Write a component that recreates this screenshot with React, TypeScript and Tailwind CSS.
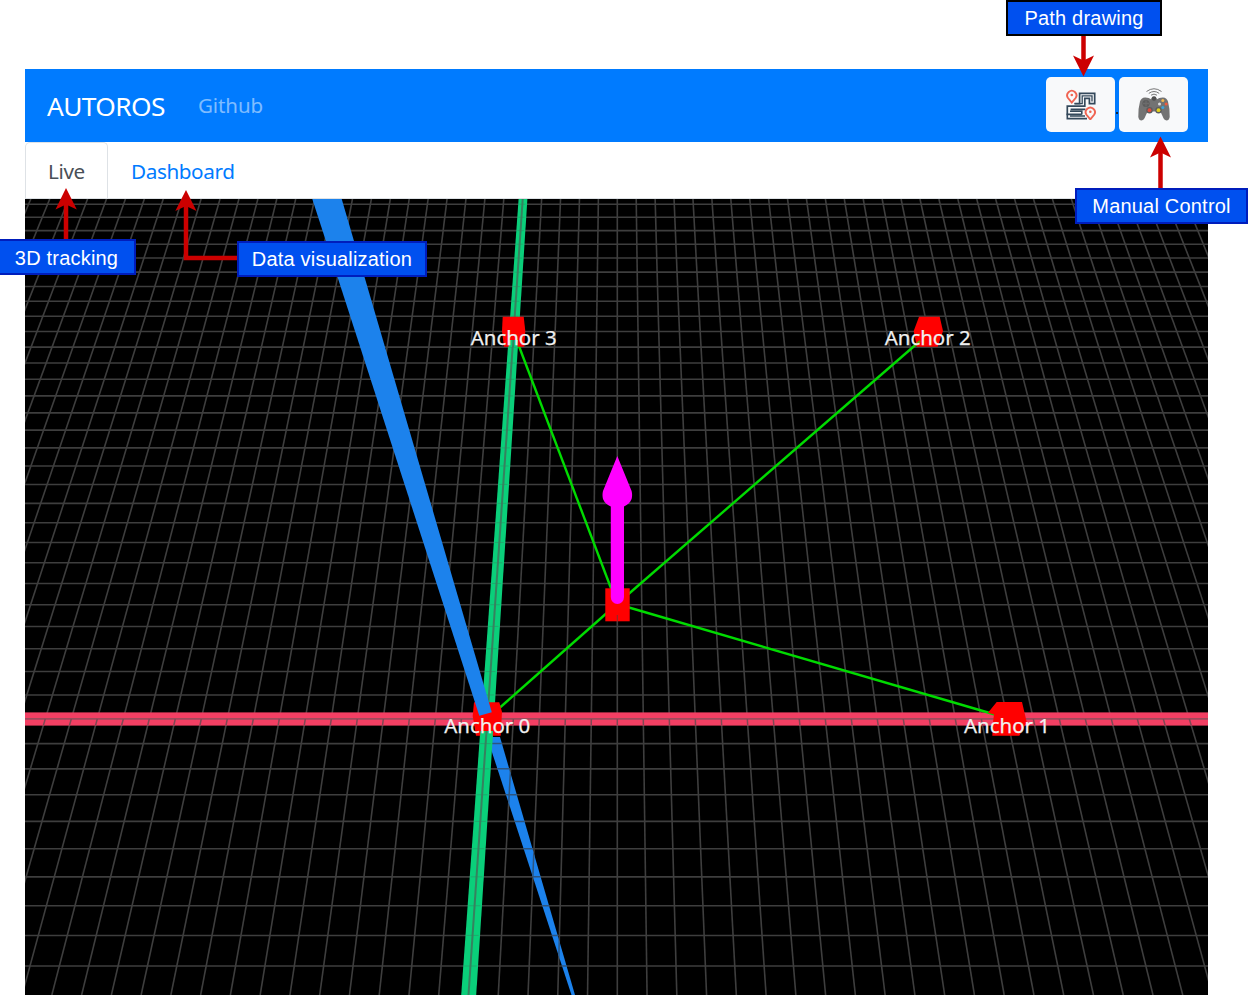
import React from "react";

const HORIZON = -1190;
const CENTER_X = 617.3;
const AXIS_Y = 718.9;
const SPREAD = 26 / (AXIS_Y - HORIZON);

const rows = Array.from({ length: 39 }, (_, n) => HORIZON + 1 / (4.6382e-4 + 6.6695e-6 * n));
const columns = Array.from({ length: 73 }, (_, i) => i - 36);
const columnX = (m: number, y: number) => CENTER_X + m * SPREAD * (y - HORIZON);

function Scene() {
  return (
    <svg viewBox="25 199 1183 796" className="block h-[796px] w-[1183px]">
      <defs>
        <clipPath id="lower-blue">
          <polygon points="487,737 500,737 575,995 571.5,995" />
        </clipPath>
      </defs>
      <rect x="25" y="199" width="1183" height="796" fill="#000" />
      <g stroke="#3e3e3e" strokeWidth="1.6">
        {rows.map((y) => (
          <line key={y} x1="25" x2="1208" y1={y} y2={y} />
        ))}
        {columns.map((m) => (
          <line key={m} x1={columnX(m, 199)} y1="199" x2={columnX(m, 995)} y2="995" />
        ))}
      </g>

      <polygon points="487,737 500,737 575,995 571.5,995" fill="#1c82ec" />
      <g stroke="#2c5580" strokeWidth="1.5" clipPath="url(#lower-blue)">
        {rows.map((y) => (
          <line key={y} x1="480" x2="600" y1={y} y2={y} />
        ))}
        {[-4, -3, -2].map((m) => (
          <line key={m} x1={columnX(m, 199)} y1="199" x2={columnX(m, 995)} y2="995" />
        ))}
      </g>

      <polygon points="518.6,199 527.4,199 476.2,995 461.2,995" fill="#0acf7a" />
      <g stroke="#2b9468" strokeWidth="1">
        {rows.map((y) => (
          <line
            key={y}
            x1={columnX(-5, y) - 3 - (y - 199) / 240}
            x2={columnX(-5, y) + 3 + (y - 199) / 240}
            y1={y}
            y2={y}
            opacity="0.6"
          />
        ))}
      </g>
      <line x1={columnX(-5, 199)} y1="199" x2={columnX(-5, 995)} y2="995" stroke="#37815f" strokeWidth="2" />

      <rect x="25" y="712.4" width="1183" height="13.2" fill="#f23f63" />
      <line x1="25" x2="1208" y1="718.9" y2="718.9" stroke="#9c4b5c" strokeWidth="1.8" />
      <g stroke="#7f4854" strokeWidth="1.5">
        {columns.map((m) => (
          <line key={m} x1={columnX(m, 719)} y1="719" x2={columnX(m, 725.6)} y2="725.6" />
        ))}
      </g>

      <g stroke="#00db00" strokeWidth="2.4">
        <line x1="617" y1="604" x2="517" y2="341" />
        <line x1="617" y1="604" x2="920" y2="341" />
        <line x1="617" y1="604" x2="1000" y2="716" />
        <line x1="617" y1="604" x2="496" y2="711" />
      </g>

      <g fill="#ff0000">
        <polygon points="502.7,316.7 523.7,316.7 525.3,331 524.3,346.7 504,346.7 502,331" />
        <polygon points="919,316.7 939.7,316.7 943,331 937.7,346.7 916.7,346.7 913.7,331" />
        <polygon points="474,702.3 499.3,702.3 502,712 500.7,735.7 476,735.7 472.7,716" />
        <polygon points="996.7,702 1022,702 1026.7,722 1019.3,735.7 992.3,735.7 993,722 994,714.5 988,712.7" />
        <rect x="605.3" y="588.3" width="24.4" height="33" />
      </g>
      <line x1="617.3" x2="617.3" y1="615" y2="621" stroke="#7b3030" strokeWidth="1" />
      <line x1="914" y1="346" x2="920" y2="341" stroke="#66a000" strokeWidth="2" />

      <polygon points="509.3,340 518,340 517.4,347 508.7,347" fill="#0acf7a" />
      <line x1="513.4" y1="340" x2="513" y2="347" stroke="#37815f" strokeWidth="2" />
      <polygon points="480.5,731 493,731 492.6,737 480,737" fill="#0acf7a" />
      <line x1="486.6" y1="731" x2="486.1" y2="737" stroke="#37815f" strokeWidth="2" />

      <polygon points="312.3,199 341.7,199 491.8,712.2 479.3,715.7" fill="#1c82ec" />

      <path
        d="M617.3 456 L631.6 491 Q632.6 495 631.6 499 C630 503 627 505 624 506.5 L624 597 A6.6 7 0 0 1 610.8 597 L610.8 506.5 C607.6 505 604.6 503 603 499 Q602 495 603 491 Z"
        fill="#ff00ff"
      />

      <g
        fill="#f0f0f0"
        stroke="#f0f0f0"
        strokeWidth="0.25"
        fontFamily="'Noto Sans', sans-serif"
        fontSize="20.4"
        textAnchor="middle"
      >
        <text x="513.7" y="345.4" textLength="86" lengthAdjust="spacingAndGlyphs">Anchor 3</text>
        <text x="927.7" y="345.4" textLength="86" lengthAdjust="spacingAndGlyphs">Anchor 2</text>
        <text x="487.3" y="733.4" textLength="86" lengthAdjust="spacingAndGlyphs">Anchor 0</text>
        <text x="1007" y="733.4" textLength="86" lengthAdjust="spacingAndGlyphs">Anchor 1</text>
      </g>
    </svg>
  );
}

function Pin({ x, y }: { x: number; y: number }) {
  return (
    <g transform={`translate(${x} ${y})`}>
      <path d="M0 7.4 L-3.8 2.8 A4.6 4.6 0 1 1 3.8 2.8 Z" fill="#f8f9fa" stroke="#f06452" strokeWidth="1.9" />
      <circle cx="0" cy="-0.2" r="1.3" fill="#f06452" />
    </g>
  );
}

function PathIcon() {
  return (
    <svg viewBox="0 0 32 32" className="h-8 w-8">
      <g fill="none" stroke="#34495b" strokeWidth="1.7">
        <path d="M9.5 15.6H14.6V5.4H29.7V15.6H24.4V10.4H19.8V18.2H2.3V26.4H16.8" />
        <path d="M9.5 15.6H17.2V7.8H27V13.4" strokeWidth="1.3" />
        <path d="M20.4 21.4H5.6M5 23.2H16.8V26.4M2.3 25.6V30.6H22M5 28H20" strokeWidth="1.6" />
      </g>
      <Pin x={6.8} y={7.2} />
      <Pin x={25.3} y={24} />
    </svg>
  );
}

function GamepadIcon() {
  return (
    <svg viewBox="0 0 32 36" className="mt-[2px] h-9 w-8">
      <g fill="none" stroke="#777" strokeWidth="1">
        <path d="M8.5 4.5Q16 -1 23.5 4.5" />
        <path d="M10.8 6.4Q16 2.6 21.2 6.4" />
        <path d="M13 8.2Q16 6 19 8.2" />
      </g>
      <path
        d="M13.5 11.2Q13.5 9.8 16 9.8Q18.5 9.8 18.5 11.2L19 12.2Q21 10.3 25 10.4Q29 10.6 30 14.5Q32 22 31.7 30Q31 33.5 28.5 33.5Q25.8 33 24.5 29L22.4 24.5H9.6L7.5 29Q6.2 33 3.5 33.5Q1 33.5 .3 30Q0 22 2 14.5Q3 10.6 7 10.4Q11 10.3 13 12.2Z"
        fill="#737373"
      />
      <circle cx="8" cy="16.5" r="3.6" fill="#5c5c5c" />
      <path d="M8 13.5V19.5M5 16.5H11" stroke="#6c6c6c" strokeWidth="1.3" />
      <circle cx="16" cy="11.5" r="2.2" fill="#505050" />
      <circle cx="11.5" cy="23.2" r="3.2" fill="#5c5c5c" />
      <circle cx="20.5" cy="23.2" r="3.2" fill="#5c5c5c" />
      <circle cx="11.5" cy="23.2" r="1.9" fill="#e34c3c" />
      <circle cx="20.5" cy="23.2" r="1.9" fill="#e4d21c" />
      <circle cx="24.8" cy="13.6" r="1.5" fill="#f3b64c" />
      <circle cx="28.2" cy="17" r="1.5" fill="#f15a3c" />
      <circle cx="21.5" cy="17" r="1.5" fill="#ddd" />
      <circle cx="24.8" cy="20.4" r="1.5" fill="#38a4dc" />
    </svg>
  );
}

function Label({ className, children }: { className: string; children: React.ReactNode }) {
  return (
    <div
      className={`absolute flex h-9 items-center justify-center border-2 bg-[#0050ef] font-['Liberation_Sans',sans-serif] text-[20px] leading-none tracking-[0.2px] whitespace-nowrap text-white ${className}`}
    >
      {children}
    </div>
  );
}

function Annotations() {
  return (
    <>
      <svg viewBox="0 0 1249 995" className="pointer-events-none absolute inset-0 h-[995px] w-[1249px]">
        <g fill="none" stroke="#cc0000" strokeWidth="4.5">
          <path d="M1083.5 35V61" />
          <path d="M1160.5 189V152" />
          <path d="M66 240V204" />
          <path d="M238 258H186V205" />
        </g>
        <g fill="#cc0000">
          <path d="M1083.5 76.5L1073 55.5L1083.5 60.5L1094 55.5Z" />
          <path d="M1160.5 136.5L1150 157.5L1160.5 152.5L1171 157.5Z" />
          <path d="M66 188L55.5 209.5L66 204.5L76.8 209.5Z" />
          <path d="M186 190L175.3 211L186 206L196.5 211Z" />
        </g>
      </svg>
      <Label className="top-0 left-[1006px] w-[156px] border-black">Path drawing</Label>
      <Label className="top-[188px] left-[1075px] w-[173px] border-[#001dbc]">Manual Control</Label>
      <Label className="top-[239px] left-[-3px] w-[139px] border-[#001dbc] pt-px">3D tracking</Label>
      <Label className="top-[241px] left-[237px] w-[190px] border-[#001dbc]">Data visualization</Label>
    </>
  );
}

export default function App() {
  return (
    <div className="relative h-[995px] w-[1249px] overflow-hidden bg-white pt-[69px] pl-[25px] font-['Noto_Sans',sans-serif]">
      <div className="w-[1183px]">
        <header className="flex h-[73px] items-center bg-[#007bff] pr-5 pl-[22px]">
          <span className="w-[119px] pt-[2px] text-[26.3px] tracking-[-0.6px] whitespace-nowrap text-white">AUTOROS</span>
          <a className="ml-8 text-[20.5px] tracking-[-0.1px] text-white/50">Github</a>
          <div className="mb-[3px] ml-auto flex items-center">
            <button className="flex h-[55px] w-[69px] items-center justify-center rounded-[5px] bg-[#f8f9fa]">
              <PathIcon />
            </button>
            <span className="mt-[18px] ml-px h-[2px] w-[2px] bg-[#10253c]" />
            <button className="ml-px flex h-[55px] w-[69px] items-center justify-center rounded-[5px] bg-[#f8f9fa]">
              <GamepadIcon />
            </button>
          </div>
        </header>
        <nav className="flex h-[57px] border-b border-[#dee2e6] text-[20.7px] tracking-[-0.4px]">
          <a className="flex w-[83px] items-center justify-center rounded-t-[5px] border border-b-0 border-[#dee2e6] pt-[3px] text-[#495057]">
            Live
          </a>
          <a className="ml-[23px] flex items-center pt-[4px] text-[#007bff]">Dashboard</a>
        </nav>
        <Scene />
      </div>
      <Annotations />
    </div>
  );
}
